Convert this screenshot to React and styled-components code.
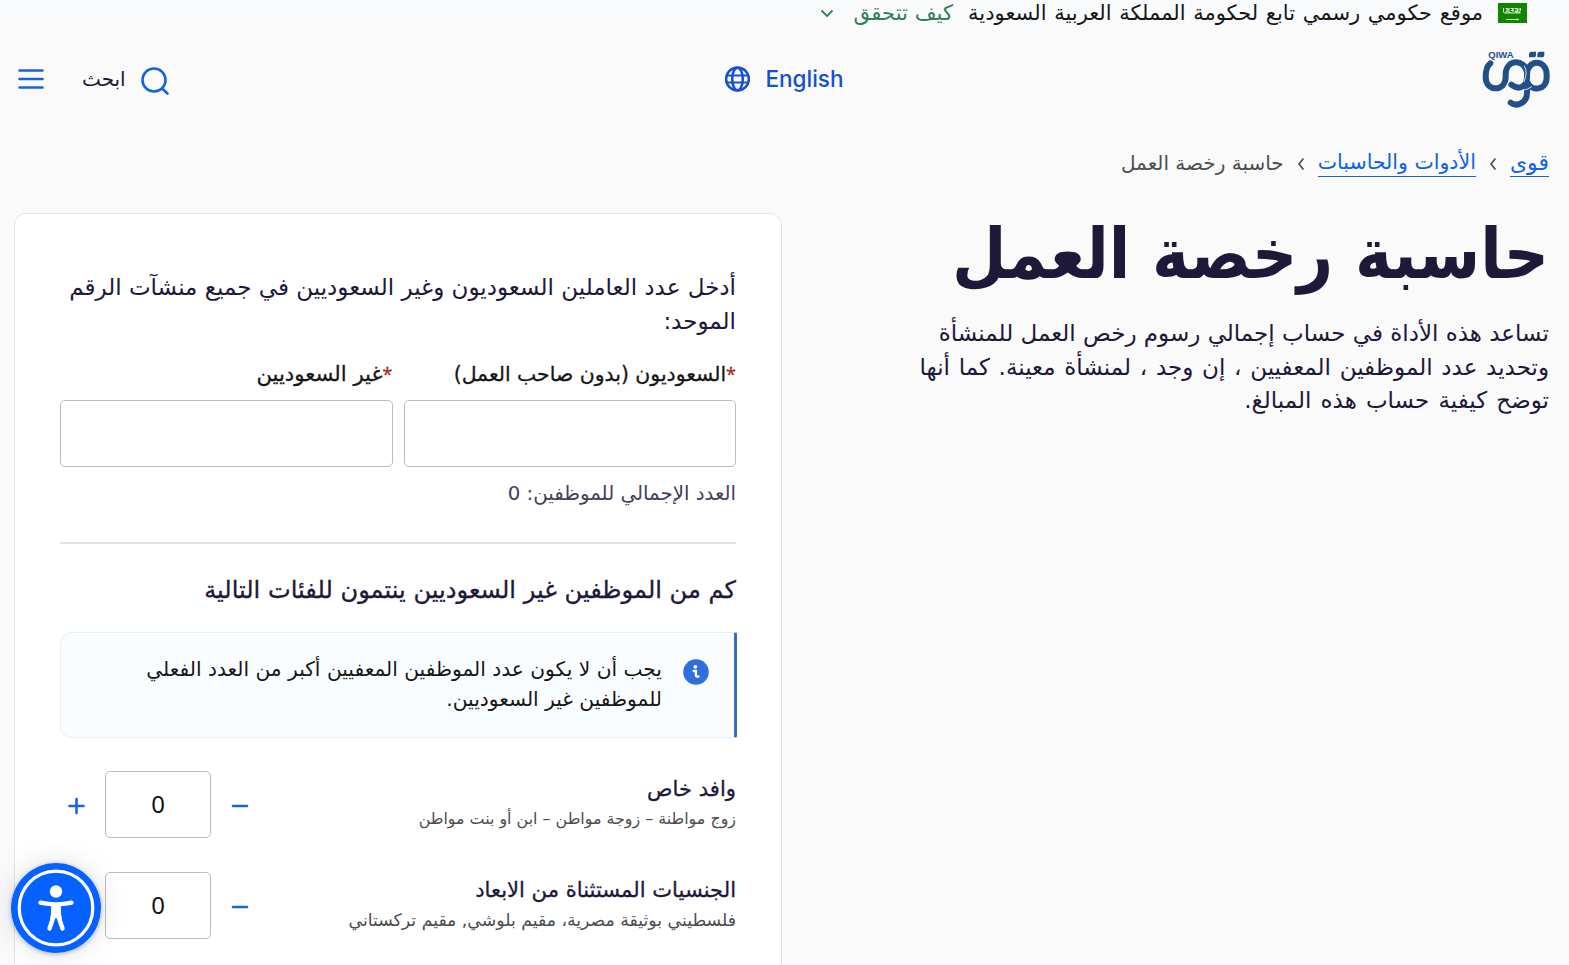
import React from 'react';
import styled, { createGlobalStyle } from 'styled-components';

const GlobalStyle = createGlobalStyle`
  *, *::before, *::after { box-sizing: border-box; }
  body {
    margin: 0;
    overflow: hidden;
    background: #fafafa;
    color: #1e1839;
    font-family: 'DejaVu Sans', sans-serif;
  }
  h1, h2, h3, p { margin: 0; font-weight: 400; }
  button { border: 0; padding: 0; background: none; color: inherit; font: inherit; }
  svg { display: block; flex: none; }
`;

const Page = styled.div`
  height: 965px;
  overflow: hidden;
`;

const GovBanner = styled.div`
  display: flex;
  align-items: center;
  height: 26px;
  padding-right: 42px;
  background: #f9fafb;
  color: #161616;
  font-size: 21px;
  line-height: 26px;
  word-spacing: 1px;
  white-space: nowrap;
`;

const BannerText = styled.span`
  margin: 0 15px;
`;

const VerifyButton = styled.button`
  display: flex;
  align-items: center;
  gap: 20px;
  color: #2f7f58;
  font-size: 21.2px;
`;

const Header = styled.header`
  display: grid;
  grid-template-columns: 1fr auto 1fr;
  align-items: center;
  height: 104px;
  padding: 2px 19px 0 18px;
`;

const Language = styled.button`
  display: flex;
  align-items: center;
  gap: 15px;
  direction: ltr;
  color: #1450d2;
  font: 500 22.5px/28px Inter, sans-serif;
`;

const Tools = styled.div`
  display: flex;
  align-items: center;
  justify-content: flex-end;
  gap: 38px;
`;

const SearchButton = styled.button`
  display: flex;
  align-items: center;
  gap: 15px;
  font-size: 20px;
`;

const Breadcrumbs = styled.nav`
  display: flex;
  align-items: center;
  gap: 8px;
  height: 66px;
  padding-right: 20px;
  color: #4c5050;
  font-size: 20px;
  line-height: 27px;
  white-space: nowrap;
`;

const Crumb = styled.a`
  color: #0f62e6;
  border-bottom: 1px solid #1464d8;
  font-size: ${(p) => p.$size || '20.5px'};
`;

const Main = styled.main`
  display: flex;
  justify-content: space-between;
  padding: 17px 20px 0 14px;
`;

const Intro = styled.section`
  display: flex;
  flex-direction: column;
  gap: 22px;
  white-space: nowrap;
`;

const Title = styled.h1`
  font: 700 69.7px/82px 'DejaVu Sans Condensed', 'DejaVu Sans', sans-serif;
`;

const Lead = styled.p`
  font-size: 23px;
  line-height: 33.5px;
`;

const LeadLine = styled.span`
  display: block;
  word-spacing: ${(p) => p.$spacing || 'normal'};
`;

const Card = styled.section`
  display: flex;
  flex-direction: column;
  width: 768px;
  height: 900px;
  padding: 56px 45px 0;
  border: 1px solid #e4e4e4;
  border-radius: 12px;
  background: #fff;
  white-space: nowrap;
`;

const Prompt = styled.p`
  font-size: 23px;
  line-height: 34px;
`;

const Fields = styled.div`
  display: grid;
  grid-template-columns: 1fr 1fr;
  gap: 11px;
  margin-top: 20px;
`;

const Field = styled.label`
  display: flex;
  flex-direction: column;
  gap: 10px;
  color: #161616;
  font-size: ${(p) => p.$size};
  line-height: 32px;
  -webkit-text-stroke: 0.3px currentColor;
`;

const Required = styled.span`
  color: #b3261e;
  font-family: 'Noto Sans', sans-serif;
  font-size: 18px;
`;

const Input = styled.input`
  width: ${(p) => p.$width || '100%'};
  height: 67px;
  padding: 0 0 2px;
  border: 1px solid #bdbdbd;
  border-radius: 5px;
  background: #fff;
  color: #111;
  text-align: center;
  font: 24px 'Noto Sans', sans-serif;
`;

const Total = styled.p`
  margin-top: 11px;
  color: #45405c;
  font-size: 19.8px;
  line-height: 32px;
`;

const Divider = styled.hr`
  width: 100%;
  height: 2px;
  margin: 32px 0 29px;
  border: 0;
  background: #e2e2e2;
`;

const Question = styled.h2`
  font-size: 24.1px;
  line-height: 34px;
  -webkit-text-stroke: 0.3px currentColor;
`;

const Notice = styled.div`
  display: flex;
  gap: 21px;
  height: 106px;
  margin: 25px -1px 0 0;
  padding: 21px 25px 0 0;
  border: 1px solid #e6f0f7;
  border-right: 3px solid #3b6cc0;
  border-radius: 12px 2px 2px 12px;
  background: #fafdff;
  color: #161616;
  font-size: 20.2px;
  line-height: 30px;
`;

const Categories = styled.div`
  display: flex;
  flex-direction: column;
  gap: 34px;
  margin-top: 33px;
`;

const Category = styled.div`
  display: flex;
  justify-content: space-between;
  height: 67px;
`;

const CategoryName = styled.h3`
  margin-top: 2px;
  font-size: 21.1px;
  line-height: 32px;
  -webkit-text-stroke: 0.3px currentColor;
`;

const CategoryHint = styled.p`
  color: #4b4b52;
  font-size: ${(p) => p.$size};
  line-height: 28px;
`;

const Stepper = styled.div`
  display: flex;
  align-items: center;
  gap: 20px;
  padding-left: 7px;
`;

const AccessibilityButton = styled.button`
  position: fixed;
  left: 11px;
  top: 863px;
  width: 90px;
  height: 90px;
  border-radius: 50%;
  box-shadow: 0 1px 5px rgba(0, 70, 180, 0.35), 0 0 30px rgba(0, 0, 0, 0.12);
`;

const Flag = () => (
  <svg width="29" height="20" viewBox="0 0 29 20">
    <rect width="29" height="20" fill="#118400" />
    <path d="M5.500 5v4.500M7.500 5.500h2.500v3.500h-3M8 7h2M11 5v4.500h2M12.500 5.500h2.500v2h-2M15 9V5M16.500 5.500h3v3.500h-3M18 6.500v2.500h2M21 5v4.500h1.500M22.500 5v3M6 10h16.500" stroke="#e4f3e1" strokeWidth=".9" fill="none" />
    <path d="M8 16.500h13M19 15.500v2" stroke="#d6edd2" strokeWidth="1" />
  </svg>
);

const Chevron = () => (
  <svg width="14" height="9" viewBox="0 0 14 9" fill="none" stroke="#2f7f58" strokeWidth="1.8">
    <path d="M1.500 1.500 7 7l5.500-5.500" />
  </svg>
);

const CrumbArrow = () => (
  <svg width="18" height="14" viewBox="0 -1 18 14" fill="none" stroke="#4c5050" strokeWidth="1.7">
    <path d="m11.500 1.500-4.500 5.500 4.500 5.500" />
  </svg>
);

const Logo = () => (
  <svg width="68" height="67" viewBox="12 18 204 201" fill="none" stroke="#234f88" strokeWidth="18" strokeLinecap="round">
    <path d="M37 70Q23 80 23 112C23 156 83 156 83 112V104C83 56 140 56 147 96" />
    <path d="M100 134C126 154 147 136 147 112V104C147 56 206 56 206 104V112C206 152 160 156 148 126" />
    <path d="M147 148V158C147 188 118 202 98 188" />
    <path d="M91 128Q84 146 70 154M139 78Q151 96 138 125M134 151Q148 150 161 140" stroke="#fafafa" strokeWidth="2.500" />
    <path d="M153 52V43Q153 35 161 35H174V44Q174 52 166 52ZM178 52V43Q178 35 186 35H199V44Q199 52 191 52Z" fill="#234f88" stroke="none" />
    <text x="107" y="53" direction="ltr" textAnchor="end" textLength="76" lengthAdjust="spacingAndGlyphs" fill="#234f88" stroke="none" fontFamily="Liberation Sans, sans-serif" fontWeight="700" fontSize="25">QIWA</text>
  </svg>
);

const Globe = () => (
  <svg width="26" height="26" viewBox="0 0 26 26" fill="none" stroke="#1450d2" strokeWidth="2.500">
    <circle cx="13.500" cy="13" r="11.400" />
    <ellipse cx="13.500" cy="13" rx="5.300" ry="11.300" />
    <path d="M2.500 9.500h22M2.500 16.500h22" strokeWidth="2.200" />
  </svg>
);

const SearchIcon = () => (
  <svg width="29" height="31" viewBox="0.500 -3 29 31" fill="none" stroke="#1662dd" strokeWidth="2.600" strokeLinecap="round">
    <circle cx="13.500" cy="13" r="11.500" />
    <path d="m21.500 21.500 5.500 5" />
  </svg>
);

const MenuIcon = () => (
  <svg width="26" height="22" viewBox="0 0 26 22" stroke="#1662dd" strokeWidth="2.500" strokeLinecap="round">
    <path d="M1.500 2.500h23M1.500 11h23M1.500 19.500h23" />
  </svg>
);

const InfoIcon = () => (
  <svg width="26" height="32" viewBox="0 -1 26 32">
    <circle cx="13" cy="17" r="12.800" fill="#2d6fdd" />
    <circle cx="12.300" cy="11.800" r="1.900" fill="#fff" />
    <path d="M10.700 16h2.200v4.500q0 1.500 2.500 1" stroke="#fff" strokeWidth="2.300" fill="none" strokeLinecap="round" />
  </svg>
);

const Minus = () => (
  <svg width="18" height="18" viewBox="0 0 18 18" stroke="#1c62d8" strokeWidth="2.600" strokeLinecap="round">
    <path d="M2 10h14" />
  </svg>
);

const Plus = () => (
  <svg width="18" height="20" viewBox="0 0 18 20" stroke="#1c62d8" strokeWidth="2.600" strokeLinecap="round">
    <path d="M2.500 11h14M9.500 4v14" />
  </svg>
);

const Person = () => (
  <svg width="90" height="90" viewBox="0 0 90 90">
    <circle cx="45" cy="45" r="45" fill="#0561ff" />
    <circle cx="45" cy="45" r="36.800" fill="none" stroke="#fff" strokeWidth="3.200" />
    <circle cx="45" cy="28.500" r="6.200" fill="#fff" />
    <path d="M29.500 39.700Q45 43 60.500 39.700M45 44v8M43 52 38.500 65.500M47 52l4.500 13.500" fill="none" stroke="#fff" strokeWidth="4.400" strokeLinecap="round" />
    <path d="M40 41h10v9l1 7-6-2-6 2 1-7Z" fill="#fff" />
    <path d="m45 56-2 6h4Z" fill="#0561ff" />
  </svg>
);

const categories = [
  { name: 'وافد خاص', hint: 'زوج مواطنة – زوجة مواطن – ابن أو بنت مواطن', size: '15.9px' },
  { name: 'الجنسيات المستثناة من الابعاد', hint: 'فلسطيني بوثيقة مصرية، مقيم بلوشي, مقيم تركستاني', size: '17.3px' },
];

export default function App() {
  return (
    <Page dir="rtl">
      <GlobalStyle />
      <GovBanner>
        <Flag />
        <BannerText>موقع حكومي رسمي تابع لحكومة المملكة العربية السعودية</BannerText>
        <VerifyButton>كيف تتحقق<Chevron /></VerifyButton>
      </GovBanner>
      <Header>
        <Logo />
        <Language><Globe />English</Language>
        <Tools>
          <SearchButton><SearchIcon />ابحث</SearchButton>
          <MenuIcon />
        </Tools>
      </Header>
      <Breadcrumbs>
        <Crumb $size="22px">قوى</Crumb>
        <CrumbArrow />
        <Crumb>الأدوات والحاسبات</Crumb>
        <CrumbArrow />
        <span>حاسبة رخصة العمل</span>
      </Breadcrumbs>
      <Main>
        <Intro>
          <Title>حاسبة رخصة العمل</Title>
          <Lead>
            <LeadLine>تساعد هذه الأداة في حساب إجمالي رسوم رخص العمل للمنشأة </LeadLine>
            <LeadLine $spacing="1.4px">وتحديد عدد الموظفين المعفيين ، إن وجد ، لمنشأة معينة. كما أنها </LeadLine>
            <LeadLine $spacing="1.8px">توضح كيفية حساب هذه المبالغ.</LeadLine>
          </Lead>
        </Intro>
        <Card>
          <Prompt>
            أدخل عدد العاملين السعوديون وغير السعوديين في جميع منشآت الرقم<br />
            الموحد:
          </Prompt>
          <Fields>
            <Field $size="20.4px">
              <span><Required>*</Required>السعوديون (بدون صاحب العمل)</span>
              <Input />
            </Field>
            <Field $size="21.2px">
              <span><Required>*</Required>غير السعوديين</span>
              <Input />
            </Field>
          </Fields>
          <Total>العدد الإجمالي للموظفين: 0</Total>
          <Divider />
          <Question>كم من الموظفين غير السعوديين ينتمون للفئات التالية</Question>
          <Notice>
            <InfoIcon />
            <p>
              يجب أن لا يكون عدد الموظفين المعفيين أكبر من العدد الفعلي<br />
              للموظفين غير السعوديين.
            </p>
          </Notice>
          <Categories>
            {categories.map(({ name, hint, size }) => (
              <Category key={name}>
                <div>
                  <CategoryName>{name}</CategoryName>
                  <CategoryHint $size={size}>{hint}</CategoryHint>
                </div>
                <Stepper>
                  <Minus />
                  <Input $width="106px" defaultValue="0" />
                  <Plus />
                </Stepper>
              </Category>
            ))}
          </Categories>
        </Card>
      </Main>
      <AccessibilityButton aria-label="إمكانية الوصول"><Person /></AccessibilityButton>
    </Page>
  );
}
